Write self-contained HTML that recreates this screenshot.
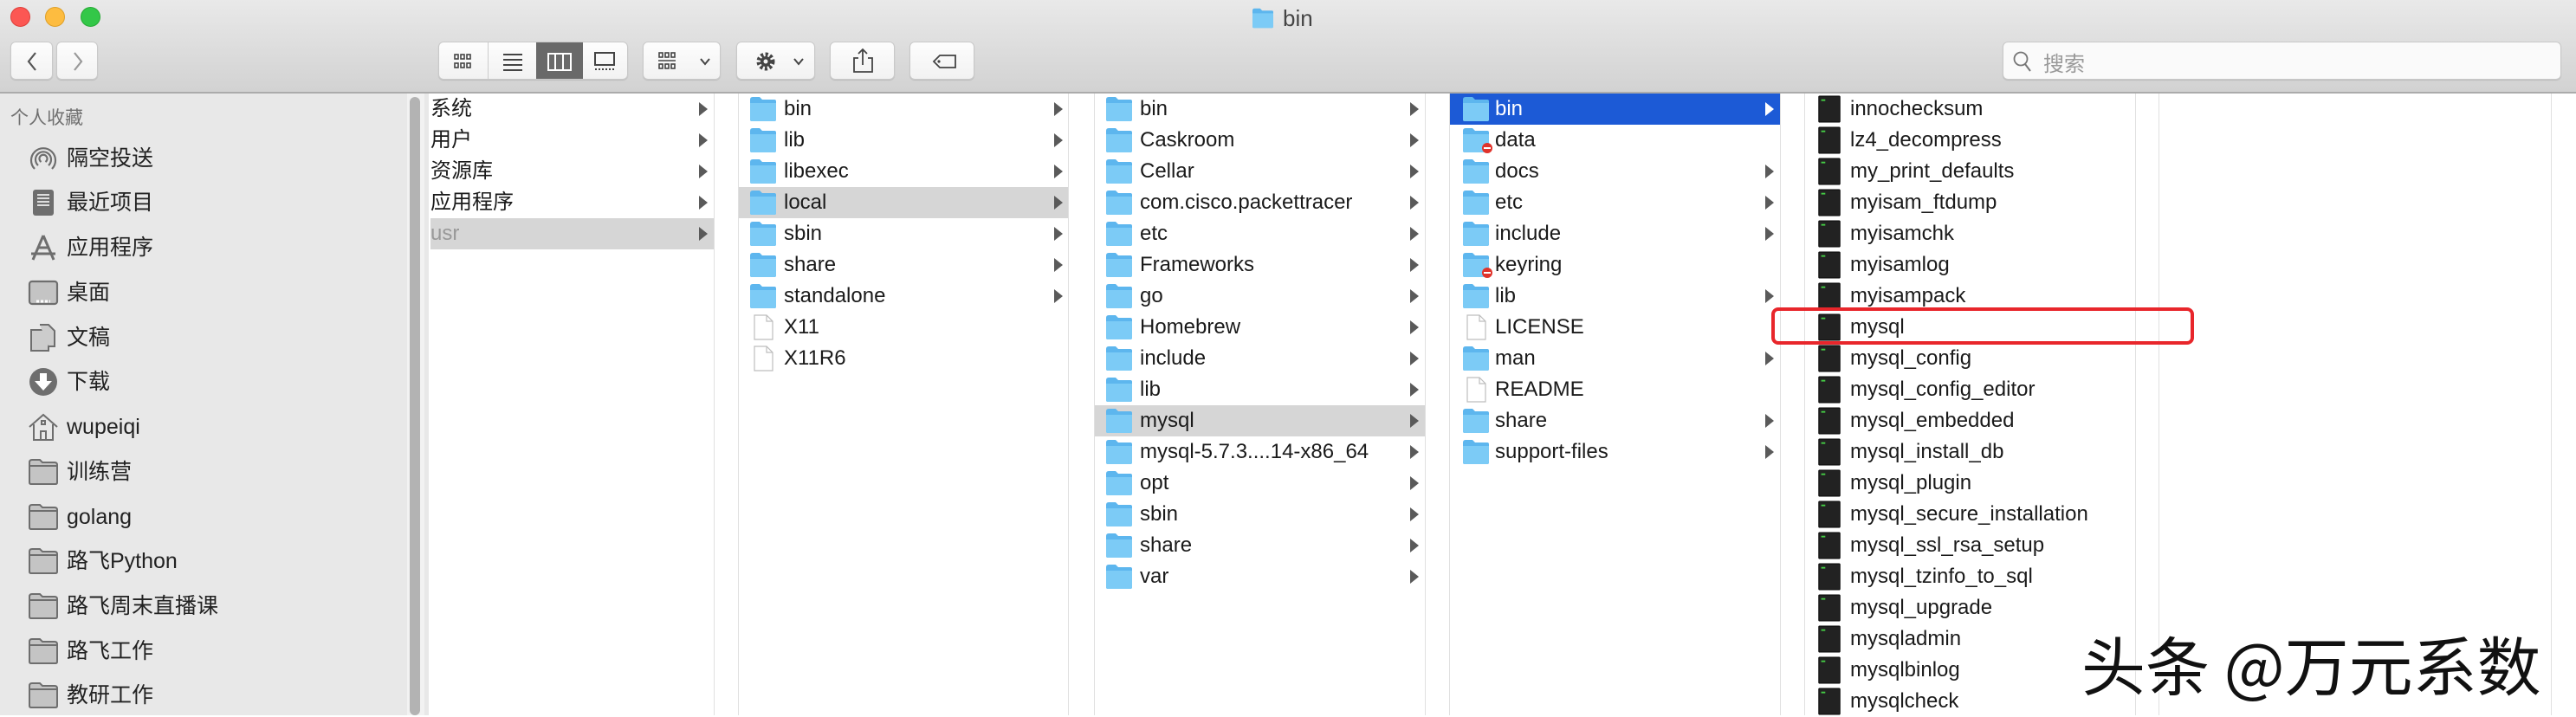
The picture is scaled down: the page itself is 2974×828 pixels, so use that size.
<!DOCTYPE html>
<html><head><meta charset="utf-8">
<style>
*{margin:0;padding:0;box-sizing:border-box}
body{width:2974px;height:826px;overflow:hidden;background:#fff;font-family:"Liberation Sans","Noto Sans CJK SC",sans-serif;position:relative}
.tb{position:absolute;left:0;top:0;width:2974px;height:108px;background:linear-gradient(#e9e9e9,#d2d2d2);border-bottom:2px solid #ababab}
.dot{position:absolute;top:8px;width:23px;height:23px;border-radius:50%}
.title{position:absolute;top:6px;left:1443px;font-size:26px;color:#444}
.btn{position:absolute;top:48px;height:44px;background:linear-gradient(#fdfdfd,#f2f2f2);border:1px solid #c9c9c9;border-radius:6px;box-shadow:0 1px 1px rgba(0,0,0,.12)}
.side{position:absolute;left:0;top:108px;width:495px;height:718px;background:#e8e8e8}
.sh{position:absolute;left:12px;top:122px;font-size:21px;color:#707070}
.si{position:absolute;left:77px;font-size:25px;color:#222;height:34px;line-height:34px}
.sic{position:absolute;left:32px;width:36px;height:34px}
.sb{position:absolute;left:470px;top:108px;width:20px;height:718px;background:#f2f2f2}
.sb i{position:absolute;left:3px;top:4px;width:12px;height:714px;background:#b3b3b3;border-radius:6px}
.vl{position:absolute;top:108px;width:1px;height:718px;background:#e0e0e0}
.r{position:absolute;height:36px;line-height:35px;font-size:24px;color:#1a1a1a;white-space:nowrap}
.r.g{background:#d6d6d6}
.r.b{background:#1c5ad6;color:#fff}
.r svg.ic{position:absolute;top:3px}
.r span{position:absolute}
.ar{position:absolute;top:10px;width:0;height:0;border-top:8px solid transparent;border-bottom:8px solid transparent;border-left:10px solid #5a5a5a}
.b .ar{border-left-color:#fff}
</style></head><body>
<svg width="0" height="0" style="position:absolute">
<defs>
<symbol id="fd" viewBox="0 0 32 30"><path d="M1 4q0-3 3-3h8l3 3h14q2 0 2 2v21q0 2-2 2H3q-2 0-2-2z" fill="#5db6ee"/><path d="M1 8h30v19q0 2-2 2H3q-2 0-2-2z" fill="#7ccbf6"/></symbol>
<symbol id="fl" viewBox="0 0 32 30"><path d="M6 1h14l7 7v21H6z" fill="#fff" stroke="#bdbdbd" stroke-width="1.2"/><path d="M20 1v7h7" fill="none" stroke="#bdbdbd" stroke-width="1.2"/></symbol>
<symbol id="ex" viewBox="0 0 28 34"><rect x="1" y="1" width="26" height="32" rx="1" fill="#222" stroke="#000"/><rect x="4" y="5" width="5" height="2" fill="#4c4"/></symbol>
<symbol id="sf" viewBox="0 0 36 34"><path d="M2 6q0-3 3-3h9l3 3h14q3 0 3 3v20q0 2-2 2H4q-2 0-2-2z" fill="#c4c4c4" stroke="#6e6e6e" stroke-width="2"/><path d="M2 10h32" stroke="#6e6e6e" stroke-width="2"/></symbol>
</defs></svg>

<div class="tb">
<div class="dot" style="left:12px;background:#fc5753;border:1px solid #de3f3a"></div>
<div class="dot" style="left:52px;background:#fdbc40;border:1px solid #de9f27"></div>
<div class="dot" style="left:93px;background:#33c748;border:1px solid #27aa35"></div>
<svg style="position:absolute;left:1443px;top:9px" width="30" height="24"><use href="#fd" width="30" height="24"/></svg>
<div class="title" style="left:1481px">bin</div>
<div class="btn" style="left:12px;width:49px"><svg width="49" height="44"><path d="M28 12l-8 10 8 10" fill="none" stroke="#555" stroke-width="2.2"/></svg></div>
<div class="btn" style="left:65px;width:48px"><svg width="48" height="44"><path d="M20 12l8 10-8 10" fill="none" stroke="#999" stroke-width="2.2"/></svg></div>
<div class="btn" style="left:506px;width:219px;overflow:hidden">
<div style="position:absolute;left:56px;top:0;width:1px;height:44px;background:#ccc"></div>
<div style="position:absolute;left:112px;top:0;width:54px;height:44px;background:#696969"></div>
<svg style="position:absolute;left:0;top:0" width="219" height="44">
<g fill="none" stroke="#444" stroke-width="1.6"><rect x="18" y="14" width="4" height="5"/><rect x="25" y="14" width="4" height="5"/><rect x="32" y="14" width="4" height="5"/><rect x="18" y="24" width="4" height="5"/><rect x="25" y="24" width="4" height="5"/><rect x="32" y="24" width="4" height="5"/></g>
<g stroke="#444" stroke-width="2"><path d="M74 14h22M74 20h22M74 26h22M74 32h22"/></g>
<g fill="none" stroke="#fff" stroke-width="2"><rect x="126" y="13" width="26" height="19"/><path d="M134 13v19M143 13v19"/></g>
<g fill="none" stroke="#444" stroke-width="2"><rect x="180" y="12" width="22" height="14"/><path d="M180 31h22" stroke-dasharray="2 2"/></g>
</svg></div>
<div class="btn" style="left:742px;width:90px"><svg width="90" height="44"><g fill="none" stroke="#444" stroke-width="1.6"><rect x="18" y="12" width="4" height="5"/><rect x="25" y="12" width="4" height="5"/><rect x="32" y="12" width="4" height="5"/><path d="M17 21h20"/><rect x="18" y="25" width="4" height="5"/><rect x="25" y="25" width="4" height="5"/><rect x="32" y="25" width="4" height="5"/><path d="M66 19l5 6 5-6" stroke-width="2"/></g></svg></div>
<div class="btn" style="left:850px;width:91px"><svg width="91" height="44"><circle cx="33" cy="22" r="8" fill="none" stroke="#444" stroke-width="5" stroke-dasharray="3 2.3"/><circle cx="33" cy="22" r="6" fill="#444"/><circle cx="33" cy="22" r="2.5" fill="#f5f5f5"/><path d="M66 19l5 6 5-6" fill="none" stroke="#444" stroke-width="2"/></svg></div>
<div class="btn" style="left:958px;width:75px"><svg width="75" height="44"><path d="M32 18h-5v16h21V18h-5M37 8v18M32 13l5-5 5 5" fill="none" stroke="#444" stroke-width="1.8"/></svg></div>
<div class="btn" style="left:1050px;width:75px"><svg width="75" height="44"><path d="M27 22l7-7h18v14H34z" fill="none" stroke="#444" stroke-width="1.8"/><circle cx="33" cy="22" r="1.6" fill="#444"/></svg></div>
<div class="btn" style="left:2312px;width:645px;background:#fafafa"><svg style="position:absolute;left:10px;top:9px" width="24" height="28"><circle cx="10" cy="10" r="7.5" fill="none" stroke="#777" stroke-width="1.8"/><path d="M15 16l6 8" stroke="#777" stroke-width="2"/></svg><span style="position:absolute;left:46px;top:5px;font-size:24px;color:#999">搜索</span></div>
</div>

<div class="side">
<div class="sh" style="top:12px">个人收藏</div>
<svg class="sic" style="top:57px" viewBox="0 0 36 34"><g fill="none" stroke="#6e6e6e" stroke-width="2.2"><path d="M8 30a14 14 0 1 1 20 0"/><path d="M12 26a9 9 0 1 1 12 0"/><path d="M15.5 22a4.5 4.5 0 1 1 5 0"/></g></svg><div class="si" style="top:58px">隔空投送</div>
<svg class="sic" style="top:109px" viewBox="0 0 36 34"><rect x="6" y="2" width="24" height="30" rx="3" fill="#6e6e6e"/><path d="M11 8h14M11 12h14M11 16h14M11 20h14" stroke="#ddd" stroke-width="2"/></svg><div class="si" style="top:109px">最近项目</div>
<svg class="sic" style="top:161px" viewBox="0 0 36 34"><path d="M18 3l-12 28M18 3l12 28M4 24h28M12 17h12" stroke="#6e6e6e" stroke-width="3" fill="none"/></svg><div class="si" style="top:161px">应用程序</div>
<svg class="sic" style="top:213px" viewBox="0 0 36 34"><rect x="2" y="4" width="32" height="26" rx="3" fill="#c4c4c4" stroke="#6e6e6e" stroke-width="2.2"/><path d="M10 27h16" stroke="#fff" stroke-width="3" stroke-dasharray="3 2"/></svg><div class="si" style="top:213px">桌面</div>
<svg class="sic" style="top:265px" viewBox="0 0 36 34"><path d="M4 8h14l6 6v18H4z" fill="#ccc" stroke="#6e6e6e" stroke-width="2"/><path d="M14 2h10l7 7v18h-7" fill="#ccc" stroke="#6e6e6e" stroke-width="2"/></svg><div class="si" style="top:265px">文稿</div>
<svg class="sic" style="top:316px" viewBox="0 0 36 34"><circle cx="18" cy="17" r="16" fill="#6e6e6e"/><path d="M14 7h8v9h6l-10 11-10-11h6z" fill="#fff"/></svg><div class="si" style="top:316px">下载</div>
<svg class="sic" style="top:368px" viewBox="0 0 36 34"><path d="M2 17L18 3l16 14M7 14v18h22V14M15 32v-10h6v10M16 10h4v4h-4z" fill="#e8e8e8" stroke="#6e6e6e" stroke-width="2"/></svg><div class="si" style="top:368px">wupeiqi</div>
<svg class="sic" style="top:420px"><use href="#sf"/></svg><div class="si" style="top:420px">训练营</div>
<svg class="sic" style="top:472px"><use href="#sf"/></svg><div class="si" style="top:472px">golang</div>
<svg class="sic" style="top:523px"><use href="#sf"/></svg><div class="si" style="top:523px">路飞Python</div>
<svg class="sic" style="top:575px"><use href="#sf"/></svg><div class="si" style="top:575px">路飞周末直播课</div>
<svg class="sic" style="top:627px"><use href="#sf"/></svg><div class="si" style="top:627px">路飞工作</div>
<svg class="sic" style="top:678px"><use href="#sf"/></svg><div class="si" style="top:678px">教研工作</div>
</div>
<div class="sb"><i></i></div>

<div class="vl" style="left:824px"></div><div class="vl" style="left:852px"></div>
<div class="vl" style="left:1233px"></div><div class="vl" style="left:1263px"></div>
<div class="vl" style="left:1645px"></div><div class="vl" style="left:1673px"></div>
<div class="vl" style="left:2055px"></div><div class="vl" style="left:2083px"></div>
<div class="vl" style="left:2465px"></div><div class="vl" style="left:2492px"></div>
<div class="vl" style="left:2945px"></div>

<div class="r" style="left:497px;top:108px;width:327px"><span style="left:0">系统</span><i class="ar" style="left:310px"></i></div>
<div class="r" style="left:497px;top:144px;width:327px"><span style="left:0">用户</span><i class="ar" style="left:310px"></i></div>
<div class="r" style="left:497px;top:180px;width:327px"><span style="left:0">资源库</span><i class="ar" style="left:310px"></i></div>
<div class="r" style="left:497px;top:216px;width:327px"><span style="left:0">应用程序</span><i class="ar" style="left:310px"></i></div>
<div class="r g" style="left:497px;top:252px;width:327px"><span style="left:0;color:#999">usr</span><i class="ar" style="left:310px"></i></div>

<div class="r" style="left:853px;top:108px;width:380px"><svg class="ic" style="left:12px" width="32" height="30"><use href="#fd"/></svg><span style="left:52px">bin</span><i class="ar" style="left:364px"></i></div>
<div class="r" style="left:853px;top:144px;width:380px"><svg class="ic" style="left:12px" width="32" height="30"><use href="#fd"/></svg><span style="left:52px">lib</span><i class="ar" style="left:364px"></i></div>
<div class="r" style="left:853px;top:180px;width:380px"><svg class="ic" style="left:12px" width="32" height="30"><use href="#fd"/></svg><span style="left:52px">libexec</span><i class="ar" style="left:364px"></i></div>
<div class="r g" style="left:853px;top:216px;width:380px"><svg class="ic" style="left:12px" width="32" height="30"><use href="#fd"/></svg><span style="left:52px">local</span><i class="ar" style="left:364px"></i></div>
<div class="r" style="left:853px;top:252px;width:380px"><svg class="ic" style="left:12px" width="32" height="30"><use href="#fd"/></svg><span style="left:52px">sbin</span><i class="ar" style="left:364px"></i></div>
<div class="r" style="left:853px;top:288px;width:380px"><svg class="ic" style="left:12px" width="32" height="30"><use href="#fd"/></svg><span style="left:52px">share</span><i class="ar" style="left:364px"></i></div>
<div class="r" style="left:853px;top:324px;width:380px"><svg class="ic" style="left:12px" width="32" height="30"><use href="#fd"/></svg><span style="left:52px">standalone</span><i class="ar" style="left:364px"></i></div>
<div class="r" style="left:853px;top:360px;width:380px"><svg class="ic" style="left:12px" width="32" height="30"><use href="#fl"/></svg><span style="left:52px">X11</span></div>
<div class="r" style="left:853px;top:396px;width:380px"><svg class="ic" style="left:12px" width="32" height="30"><use href="#fl"/></svg><span style="left:52px">X11R6</span></div>

<div class="r" style="left:1264px;top:108px;width:381px"><svg class="ic" style="left:12px" width="32" height="30"><use href="#fd"/></svg><span style="left:52px">bin</span><i class="ar" style="left:364px"></i></div>
<div class="r" style="left:1264px;top:144px;width:381px"><svg class="ic" style="left:12px" width="32" height="30"><use href="#fd"/></svg><span style="left:52px">Caskroom</span><i class="ar" style="left:364px"></i></div>
<div class="r" style="left:1264px;top:180px;width:381px"><svg class="ic" style="left:12px" width="32" height="30"><use href="#fd"/></svg><span style="left:52px">Cellar</span><i class="ar" style="left:364px"></i></div>
<div class="r" style="left:1264px;top:216px;width:381px"><svg class="ic" style="left:12px" width="32" height="30"><use href="#fd"/></svg><span style="left:52px">com.cisco.packettracer</span><i class="ar" style="left:364px"></i></div>
<div class="r" style="left:1264px;top:252px;width:381px"><svg class="ic" style="left:12px" width="32" height="30"><use href="#fd"/></svg><span style="left:52px">etc</span><i class="ar" style="left:364px"></i></div>
<div class="r" style="left:1264px;top:288px;width:381px"><svg class="ic" style="left:12px" width="32" height="30"><use href="#fd"/></svg><span style="left:52px">Frameworks</span><i class="ar" style="left:364px"></i></div>
<div class="r" style="left:1264px;top:324px;width:381px"><svg class="ic" style="left:12px" width="32" height="30"><use href="#fd"/></svg><span style="left:52px">go</span><i class="ar" style="left:364px"></i></div>
<div class="r" style="left:1264px;top:360px;width:381px"><svg class="ic" style="left:12px" width="32" height="30"><use href="#fd"/></svg><span style="left:52px">Homebrew</span><i class="ar" style="left:364px"></i></div>
<div class="r" style="left:1264px;top:396px;width:381px"><svg class="ic" style="left:12px" width="32" height="30"><use href="#fd"/></svg><span style="left:52px">include</span><i class="ar" style="left:364px"></i></div>
<div class="r" style="left:1264px;top:432px;width:381px"><svg class="ic" style="left:12px" width="32" height="30"><use href="#fd"/></svg><span style="left:52px">lib</span><i class="ar" style="left:364px"></i></div>
<div class="r g" style="left:1264px;top:468px;width:381px"><svg class="ic" style="left:12px" width="32" height="30"><use href="#fd"/></svg><span style="left:52px">mysql</span><i class="ar" style="left:364px"></i></div>
<div class="r" style="left:1264px;top:504px;width:381px"><svg class="ic" style="left:12px" width="32" height="30"><use href="#fd"/></svg><span style="left:52px">mysql-5.7.3....14-x86_64</span><i class="ar" style="left:364px"></i></div>
<div class="r" style="left:1264px;top:540px;width:381px"><svg class="ic" style="left:12px" width="32" height="30"><use href="#fd"/></svg><span style="left:52px">opt</span><i class="ar" style="left:364px"></i></div>
<div class="r" style="left:1264px;top:576px;width:381px"><svg class="ic" style="left:12px" width="32" height="30"><use href="#fd"/></svg><span style="left:52px">sbin</span><i class="ar" style="left:364px"></i></div>
<div class="r" style="left:1264px;top:612px;width:381px"><svg class="ic" style="left:12px" width="32" height="30"><use href="#fd"/></svg><span style="left:52px">share</span><i class="ar" style="left:364px"></i></div>
<div class="r" style="left:1264px;top:648px;width:381px"><svg class="ic" style="left:12px" width="32" height="30"><use href="#fd"/></svg><span style="left:52px">var</span><i class="ar" style="left:364px"></i></div>

<div class="r b" style="left:1674px;top:108px;width:381px"><svg class="ic" style="left:14px" width="32" height="30"><use href="#fd"/></svg><span style="left:52px">bin</span><i class="ar" style="left:364px"></i></div>
<div class="r" style="left:1674px;top:144px;width:381px"><svg class="ic" style="left:14px" width="32" height="30"><use href="#fd"/></svg><svg style="position:absolute;left:36px;top:20px" width="14" height="14"><circle cx="7" cy="7" r="6" fill="#e0332b"/><rect x="3" y="6" width="8" height="2" fill="#fff"/></svg><span style="left:52px">data</span></div>
<div class="r" style="left:1674px;top:180px;width:381px"><svg class="ic" style="left:14px" width="32" height="30"><use href="#fd"/></svg><span style="left:52px">docs</span><i class="ar" style="left:364px"></i></div>
<div class="r" style="left:1674px;top:216px;width:381px"><svg class="ic" style="left:14px" width="32" height="30"><use href="#fd"/></svg><span style="left:52px">etc</span><i class="ar" style="left:364px"></i></div>
<div class="r" style="left:1674px;top:252px;width:381px"><svg class="ic" style="left:14px" width="32" height="30"><use href="#fd"/></svg><span style="left:52px">include</span><i class="ar" style="left:364px"></i></div>
<div class="r" style="left:1674px;top:288px;width:381px"><svg class="ic" style="left:14px" width="32" height="30"><use href="#fd"/></svg><svg style="position:absolute;left:36px;top:20px" width="14" height="14"><circle cx="7" cy="7" r="6" fill="#e0332b"/><rect x="3" y="6" width="8" height="2" fill="#fff"/></svg><span style="left:52px">keyring</span></div>
<div class="r" style="left:1674px;top:324px;width:381px"><svg class="ic" style="left:14px" width="32" height="30"><use href="#fd"/></svg><span style="left:52px">lib</span><i class="ar" style="left:364px"></i></div>
<div class="r" style="left:1674px;top:360px;width:381px"><svg class="ic" style="left:14px" width="32" height="30"><use href="#fl"/></svg><span style="left:52px">LICENSE</span></div>
<div class="r" style="left:1674px;top:396px;width:381px"><svg class="ic" style="left:14px" width="32" height="30"><use href="#fd"/></svg><span style="left:52px">man</span><i class="ar" style="left:364px"></i></div>
<div class="r" style="left:1674px;top:432px;width:381px"><svg class="ic" style="left:14px" width="32" height="30"><use href="#fl"/></svg><span style="left:52px">README</span></div>
<div class="r" style="left:1674px;top:468px;width:381px"><svg class="ic" style="left:14px" width="32" height="30"><use href="#fd"/></svg><span style="left:52px">share</span><i class="ar" style="left:364px"></i></div>
<div class="r" style="left:1674px;top:504px;width:381px"><svg class="ic" style="left:14px" width="32" height="30"><use href="#fd"/></svg><span style="left:52px">support-files</span><i class="ar" style="left:364px"></i></div>

<div class="r" style="left:2083px;top:108px"><svg class="ic" style="left:15px;top:2px" width="28" height="32"><use href="#ex"/></svg><span style="left:53px">innochecksum</span></div>
<div class="r" style="left:2083px;top:144px"><svg class="ic" style="left:15px;top:2px" width="28" height="32"><use href="#ex"/></svg><span style="left:53px">lz4_decompress</span></div>
<div class="r" style="left:2083px;top:180px"><svg class="ic" style="left:15px;top:2px" width="28" height="32"><use href="#ex"/></svg><span style="left:53px">my_print_defaults</span></div>
<div class="r" style="left:2083px;top:216px"><svg class="ic" style="left:15px;top:2px" width="28" height="32"><use href="#ex"/></svg><span style="left:53px">myisam_ftdump</span></div>
<div class="r" style="left:2083px;top:252px"><svg class="ic" style="left:15px;top:2px" width="28" height="32"><use href="#ex"/></svg><span style="left:53px">myisamchk</span></div>
<div class="r" style="left:2083px;top:288px"><svg class="ic" style="left:15px;top:2px" width="28" height="32"><use href="#ex"/></svg><span style="left:53px">myisamlog</span></div>
<div class="r" style="left:2083px;top:324px"><svg class="ic" style="left:15px;top:2px" width="28" height="32"><use href="#ex"/></svg><span style="left:53px">myisampack</span></div>
<div class="r" style="left:2083px;top:360px"><svg class="ic" style="left:15px;top:2px" width="28" height="32"><use href="#ex"/></svg><span style="left:53px">mysql</span></div>
<div class="r" style="left:2083px;top:396px"><svg class="ic" style="left:15px;top:2px" width="28" height="32"><use href="#ex"/></svg><span style="left:53px">mysql_config</span></div>
<div class="r" style="left:2083px;top:432px"><svg class="ic" style="left:15px;top:2px" width="28" height="32"><use href="#ex"/></svg><span style="left:53px">mysql_config_editor</span></div>
<div class="r" style="left:2083px;top:468px"><svg class="ic" style="left:15px;top:2px" width="28" height="32"><use href="#ex"/></svg><span style="left:53px">mysql_embedded</span></div>
<div class="r" style="left:2083px;top:504px"><svg class="ic" style="left:15px;top:2px" width="28" height="32"><use href="#ex"/></svg><span style="left:53px">mysql_install_db</span></div>
<div class="r" style="left:2083px;top:540px"><svg class="ic" style="left:15px;top:2px" width="28" height="32"><use href="#ex"/></svg><span style="left:53px">mysql_plugin</span></div>
<div class="r" style="left:2083px;top:576px"><svg class="ic" style="left:15px;top:2px" width="28" height="32"><use href="#ex"/></svg><span style="left:53px">mysql_secure_installation</span></div>
<div class="r" style="left:2083px;top:612px"><svg class="ic" style="left:15px;top:2px" width="28" height="32"><use href="#ex"/></svg><span style="left:53px">mysql_ssl_rsa_setup</span></div>
<div class="r" style="left:2083px;top:648px"><svg class="ic" style="left:15px;top:2px" width="28" height="32"><use href="#ex"/></svg><span style="left:53px">mysql_tzinfo_to_sql</span></div>
<div class="r" style="left:2083px;top:684px"><svg class="ic" style="left:15px;top:2px" width="28" height="32"><use href="#ex"/></svg><span style="left:53px">mysql_upgrade</span></div>
<div class="r" style="left:2083px;top:720px"><svg class="ic" style="left:15px;top:2px" width="28" height="32"><use href="#ex"/></svg><span style="left:53px">mysqladmin</span></div>
<div class="r" style="left:2083px;top:756px"><svg class="ic" style="left:15px;top:2px" width="28" height="32"><use href="#ex"/></svg><span style="left:53px">mysqlbinlog</span></div>
<div class="r" style="left:2083px;top:792px"><svg class="ic" style="left:15px;top:2px" width="28" height="32"><use href="#ex"/></svg><span style="left:53px">mysqlcheck</span></div>

<div style="position:absolute;left:2045px;top:355px;width:488px;height:43px;border:4px solid #e8262b;border-radius:8px"></div>

<div style="position:absolute;left:2403px;top:712px;font-size:74px;color:#111;font-family:'Noto Sans CJK SC','WenQuanYi Zen Hei',sans-serif;white-space:nowrap;text-shadow:0 0 3px #fff,0 0 3px #fff;letter-spacing:0px">头条 @万元系数</div>
</body></html>
